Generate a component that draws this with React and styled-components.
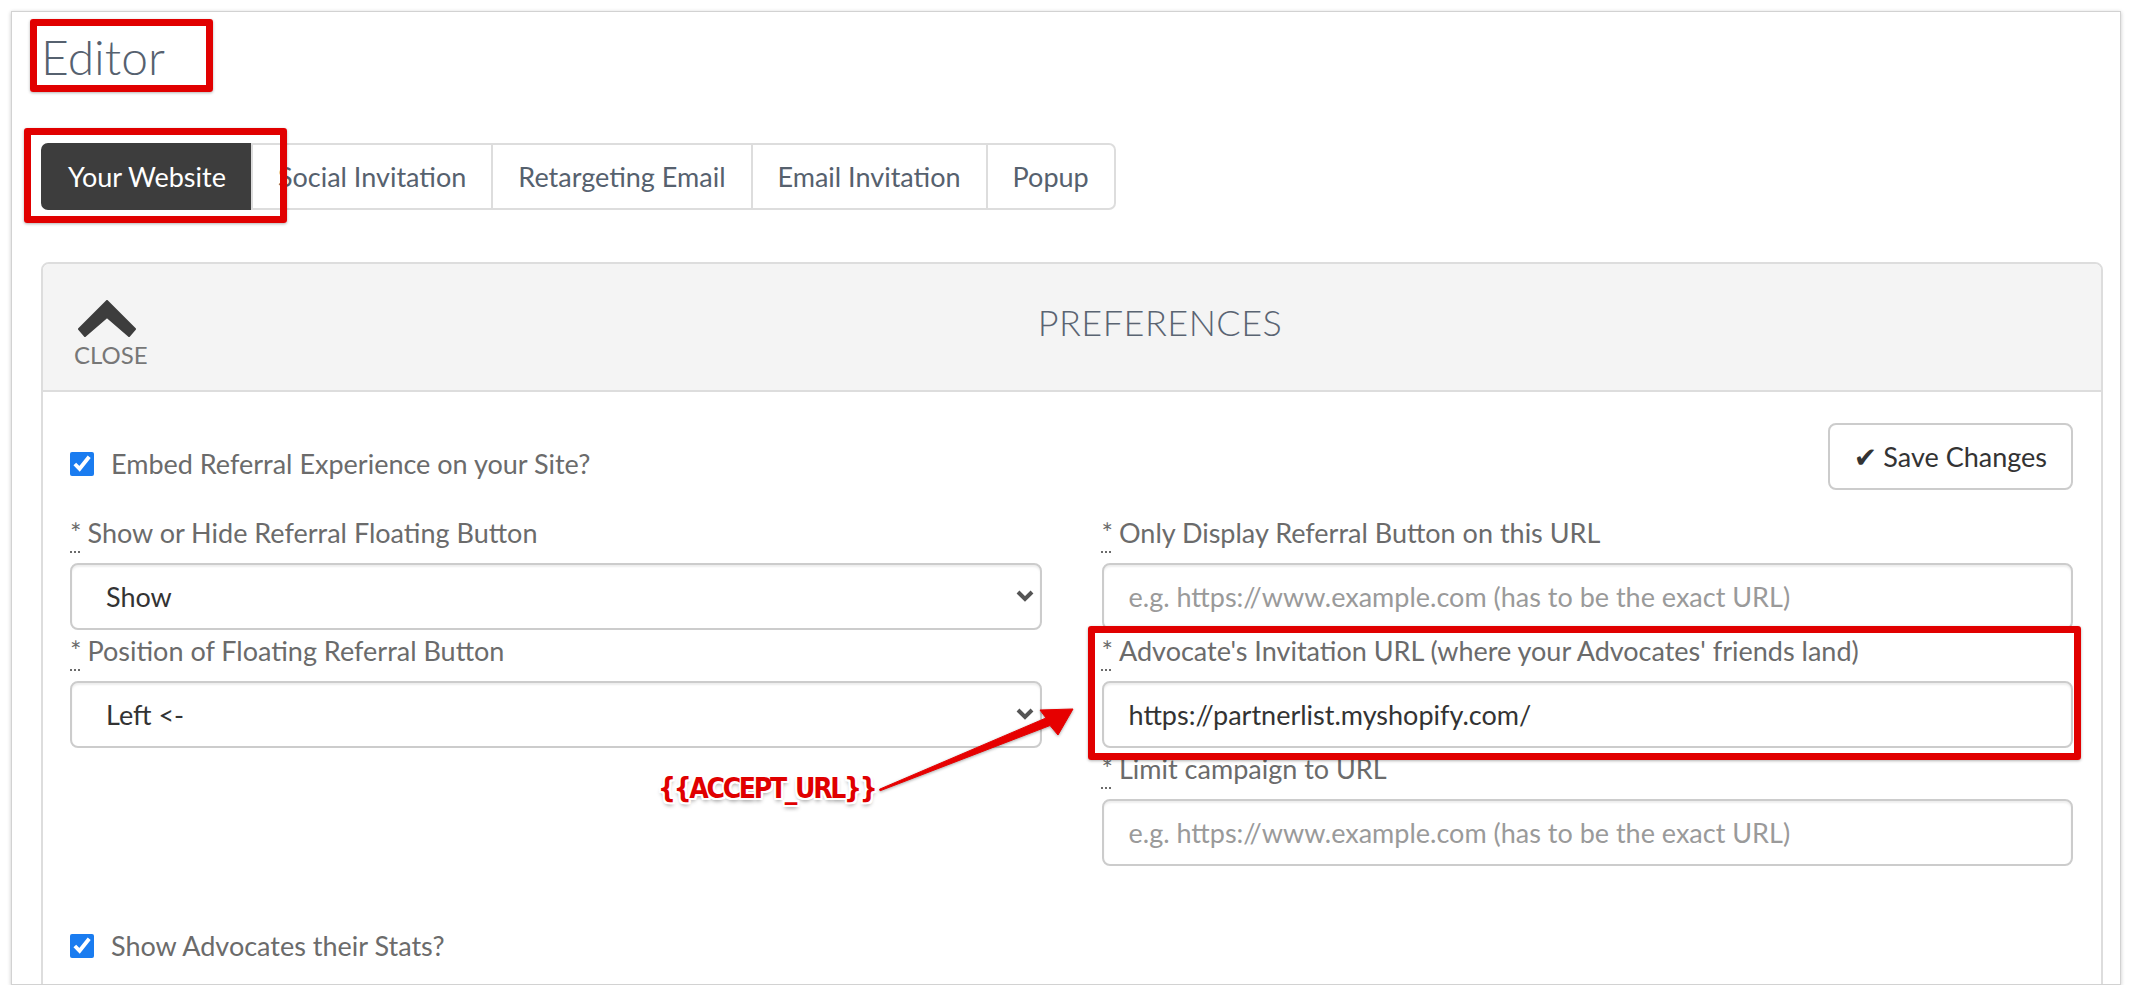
import styled, { createGlobalStyle } from 'styled-components';

const GlobalStyle = createGlobalStyle`
  html, body {
    margin: 0;
    padding: 0;
    background: #ffffff;
  }
  body {
    font-family: Lato, "Open Sans", "Liberation Sans", sans-serif;
    color: #666;
  }
  * {
    box-sizing: border-box;
  }
`;

const Frame = styled.div`
  position: relative;
  width: 2110px;
  height: 974px;
  margin: 11px 0 0 11px;
  padding: 16px 17px 0 29px;
  border: 1px solid #d2d2d2;
  box-shadow: 0 1px 4px rgba(0, 0, 0, 0.22);
  overflow: hidden;
  background: #fff;
`;

const Title = styled.h1`
  margin: 0;
  font-size: 48px;
  line-height: 58px;
  font-weight: 300;
  color: #56616f;
`;

const TabGroup = styled.div`
  display: flex;
  width: fit-content;
  margin-top: 57px;
`;

const Tab = styled.div`
  height: 67px;
  display: flex;
  align-items: center;
  padding: 0 25px;
  font-size: 27px;
  color: ${p => (p.$active ? '#ffffff' : '#56616e')};
  background: ${p => (p.$active ? '#3d3d3d' : '#ffffff')};
  border: 2px solid ${p => (p.$active ? '#3d3d3d' : '#dddddd')};
  margin-left: -2px;

  &:first-child {
    margin-left: 0;
    border-radius: 7px 0 0 7px;
  }
  &:last-child {
    border-radius: 0 7px 7px 0;
  }
`;

const Panel = styled.section`
  margin-top: 52px;
  border: 2px solid #dddddd;
  border-radius: 8px 8px 0 0;
  height: 1000px;
`;

const PanelHeader = styled.header`
  display: grid;
  grid-template-columns: 1fr auto 1fr;
  align-items: center;
  height: 128px;
  padding: 0 31px;
  background: #f4f4f4;
  border-bottom: 2px solid #dddddd;
  border-radius: 6px 6px 0 0;
`;

const CloseButton = styled.div`
  justify-self: start;
  display: flex;
  flex-direction: column;
  align-items: center;
  margin-top: 14px;
  cursor: pointer;

  svg {
    margin-right: 8px;
  }
`;

const CloseText = styled.span`
  margin-top: 4px;
  font-size: 24px;
  line-height: 28px;
  color: #777;
`;

const PanelTitle = styled.h2`
  margin: 0 0 10px;
  padding-left: 176px;
  font-size: 36px;
  font-weight: 300;
  letter-spacing: 0.5px;
  color: #5a6472;
`;

const PanelBody = styled.div`
  padding: 31px 28px 0 27px;
`;

const TopRow = styled.div`
  display: flex;
  justify-content: space-between;
  align-items: center;
`;

const CheckRow = styled.label`
  display: flex;
  align-items: center;
  gap: 17px;
  font-size: 27px;
  line-height: 36px;
  color: #6b6b6b;
  margin-top: ${p => p.$offset || 0}px;
`;

const Check = styled.input`
  width: 24px;
  height: 24px;
  margin: 0;
  accent-color: #1a7cf0;
`;

const SaveButton = styled.button`
  height: 67px;
  padding: 0 24px;
  font-family: Lato, "Liberation Sans", sans-serif;
  font-size: 27px;
  color: #333;
  background: #fff;
  border: 2px solid #cccccc;
  border-radius: 8px;
`;

const CheckMark = styled.span`
  font-family: "DejaVu Sans", sans-serif;
  font-size: 28px;
  margin-right: 6px;
`;

const FieldGrid = styled.div`
  display: grid;
  grid-template-columns: 1fr 1fr;
  column-gap: 60px;
  margin-top: 25px;
  align-items: start;
`;

const Column = styled.div`
  display: flex;
  flex-direction: column;
`;

const Field = styled.div`
  margin-bottom: 3px;
`;

const Label = styled.label`
  display: block;
  margin-bottom: 12px;
  font-size: 27px;
  line-height: 36px;
  color: #6b6b6b;
`;

const Req = styled.abbr`
  text-decoration: underline dotted;
  text-underline-offset: 8px;
  text-decoration-thickness: 2px;
  margin-right: 6px;
`;

const SelectWrap = styled.div`
  position: relative;
`;

const Select = styled.select`
  width: 100%;
  height: 67px;
  padding: 0 50px 0 34px;
  appearance: none;
  font-family: Lato, "Liberation Sans", sans-serif;
  font-size: 27px;
  color: #333;
  background: #fff;
  border: 2px solid #cccccc;
  border-radius: 8px;
  box-shadow: inset 0 2px 2px rgba(0, 0, 0, 0.07);
`;

const SelectArrow = styled.svg`
  position: absolute;
  right: 8px;
  top: 27px;
  pointer-events: none;
`;

const Input = styled.input`
  width: 100%;
  height: 67px;
  padding: 0 25px;
  font-family: Lato, "Liberation Sans", sans-serif;
  font-size: 27px;
  color: #333;
  background: #fff;
  border: 2px solid #cccccc;
  border-radius: 8px;
  box-shadow: inset 0 2px 2px rgba(0, 0, 0, 0.07);

  &::placeholder {
    color: #9a9a9a;
  }
`;

const StatsRow = styled.div`
  margin-top: 59px;
`;

/* annotations drawn on top of the screenshot */
const Highlight = styled.div`
  position: absolute;
  border: 7px solid #e10000;
  border-radius: 3px;
  box-shadow: 0 1px 3px rgba(0, 0, 0, 0.3);
  pointer-events: none;
`;

const ArrowSvg = styled.svg`
  position: absolute;
  left: 848px;
  top: 678px;
  overflow: visible;
  filter: drop-shadow(0 1px 1.5px rgba(0, 0, 0, 0.35));
`;

const CalloutText = styled.span`
  position: absolute;
  left: 646px;
  top: 759px;
  font-family: "DejaVu Sans Condensed", "DejaVu Sans", sans-serif;
  font-stretch: condensed;
  font-weight: 700;
  font-size: 28px;
  letter-spacing: -2.3px;
  line-height: 36px;
  color: #e00000;
  text-shadow:
    2px 0 0 #fff, -2px 0 0 #fff, 0 2px 0 #fff, 0 -2px 0 #fff,
    2px 2px 0 #fff, -2px -2px 0 #fff, 2px -2px 0 #fff, -2px 2px 0 #fff,
    0 3px 4px rgba(0, 0, 0, 0.45);
`;

const ChevronUp = () => (
  <svg width="58" height="37" viewBox="0 0 58 37">
    <polygon
      points="29,1 57,29 51,36 29,17 7,36 1,29"
      fill="#3d3d3d"
      stroke="#3d3d3d"
      strokeWidth="2"
      strokeLinejoin="round"
    />
  </svg>
);

const ChevronDown = () => (
  <SelectArrow width="18" height="13" viewBox="0 0 18 13">
    <polyline points="2,2 9,9 16,2" fill="none" stroke="#555" strokeWidth="4" />
  </SelectArrow>
);

const tabs = ['Your Website', 'Social Invitation', 'Retargeting Email', 'Email Invitation', 'Popup'];

const SelectField = ({ label, value, options }) => (
  <Field>
    <Label><Req title="required">*</Req>{label}</Label>
    <SelectWrap>
      <Select defaultValue={value}>
        {options.map(o => <option key={o}>{o}</option>)}
      </Select>
      <ChevronDown />
    </SelectWrap>
  </Field>
);

const TextField = ({ label, value, placeholder }) => (
  <Field>
    <Label><Req title="required">*</Req>{label}</Label>
    <Input defaultValue={value} placeholder={placeholder} />
  </Field>
);

const PLACEHOLDER = 'e.g. https://www.example.com (has to be the exact URL)';

export default function App() {
  return (
    <>
      <GlobalStyle />
      <Frame>
        <Title>Editor</Title>

        <TabGroup>
          {tabs.map((t, i) => (
            <Tab key={t} $active={i === 0}>{t}</Tab>
          ))}
        </TabGroup>

        <Panel>
          <PanelHeader>
            <CloseButton>
              <ChevronUp />
              <CloseText>CLOSE</CloseText>
            </CloseButton>
            <PanelTitle>PREFERENCES</PanelTitle>
            <div />
          </PanelHeader>

          <PanelBody>
            <TopRow>
              <CheckRow $offset={15}>
                <Check type="checkbox" defaultChecked />
                Embed Referral Experience on your Site?
              </CheckRow>
              <SaveButton><CheckMark>✔</CheckMark>Save Changes</SaveButton>
            </TopRow>

            <FieldGrid>
              <Column>
                <SelectField
                  label="Show or Hide Referral Floating Button"
                  value="Show"
                  options={['Show', 'Hide']}
                />
                <SelectField
                  label="Position of Floating Referral Button"
                  value="Left <-"
                  options={['Left <-', 'Right ->']}
                />
              </Column>
              <Column>
                <TextField label="Only Display Referral Button on this URL" placeholder={PLACEHOLDER} />
                <TextField
                  label="Advocate's Invitation URL (where your Advocates' friends land)"
                  value="https://partnerlist.myshopify.com/"
                />
                <TextField label="Limit campaign to URL" placeholder={PLACEHOLDER} />
              </Column>
            </FieldGrid>

            <StatsRow>
              <CheckRow>
                <Check type="checkbox" defaultChecked />
                Show Advocates their Stats?
              </CheckRow>
            </StatsRow>
          </PanelBody>
        </Panel>

        <Highlight style={{ left: 18, top: 7, width: 183, height: 73 }} />
        <Highlight style={{ left: 12, top: 116, width: 263, height: 95 }} />
        <Highlight style={{ left: 1076, top: 614, width: 993, height: 134 }} />

        <ArrowSvg width="230" height="112" viewBox="0 0 230 112">
          <polygon
            points="20,100.8 190,35.5 198,45 213,19 180,20 186,28 19.6,99.2"
            fill="#e60000"
            stroke="#e60000"
            strokeWidth="1"
            strokeLinejoin="round"
          />
        </ArrowSvg>
        <CalloutText>{'{{ACCEPT_URL}}'}</CalloutText>
      </Frame>
    </>
  );
}
